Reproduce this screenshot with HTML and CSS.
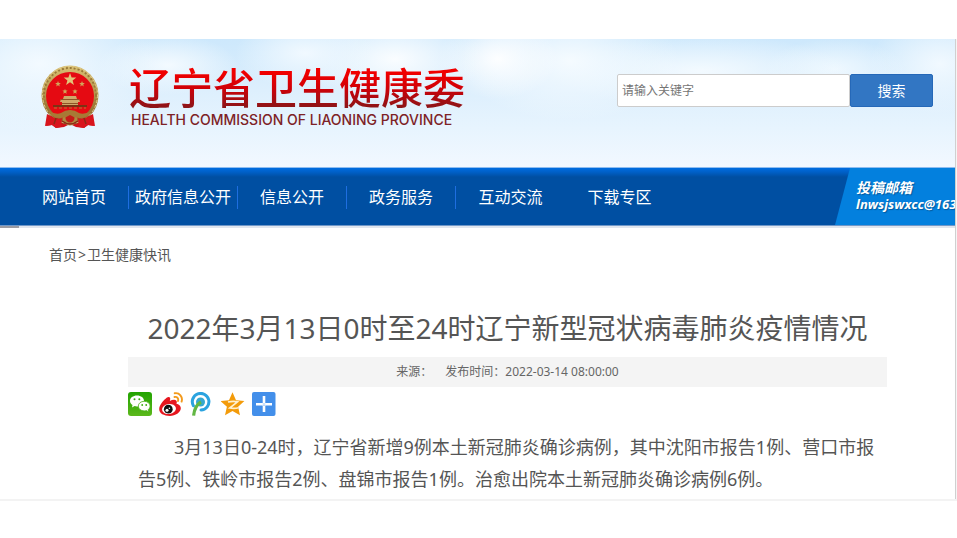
FILE: index.html
```html
<!DOCTYPE html>
<html lang="zh-CN">
  <head>
    <title>辽宁省卫生健康委</title>
    <meta charset="utf-8" />
    <meta name="viewport" content="width=device-width, initial-scale=1" />
    <link rel="stylesheet" href="styles.css">
  </head>
  <body>
    <div class="page">
      <div class="site">
        <header class="header">
          <a href="#" class="logo">
            <svg class="emblem" viewBox="0 0 58 64" aria-hidden="true">
              <defs>
                <linearGradient id="gold" x1="0" y1="0" x2="0" y2="1">
                  <stop offset="0" stop-color="#d9c074" />
                  <stop offset="0.5" stop-color="#b3924a" />
                  <stop offset="1" stop-color="#7d5520" />
                </linearGradient>
              </defs>
              <path d="M9 50L5 61l6-1 4 3 8-1 6-3 6 3 8 1 4-3 6 1-4-11z" fill="#d3101a" />
              <ellipse cx="29" cy="30" rx="28.500" ry="29.500" fill="url(#gold)" />
              <ellipse cx="29" cy="30" rx="26" ry="27" fill="none" stroke="#9a7a38" stroke-width="2" stroke-dasharray="2 2" />
              <ellipse cx="29" cy="30" rx="27.500" ry="28.500" fill="none" stroke="#e2cf90" stroke-width="1" stroke-dasharray="3 2" />
              <circle cx="29" cy="31" r="24" fill="#e50a12" />
              <path d="M29 8l1.600 4.400 4.700.1-3.700 2.900 1.300 4.500L29 17.300l-3.900 2.600 1.300-4.500-3.700-2.900 4.700-.1z" fill="#e2c479" />
              <path d="M17 16l.8 2 2 .1-1.600 1.300.6 2.100-1.800-1.200-1.800 1.200.6-2.100-1.600-1.300 2-.1zM41 16l.8 2 2 .1-1.600 1.300.6 2.100-1.800-1.200-1.800 1.200.6-2.100-1.600-1.300 2-.1zM24 24l.8 1.500 1.800.1-1.400 1.200.5 1.900-1.700-1-1.700 1 .5-1.900-1.400-1.200 1.800-.1zM34 24l.8 1.500 1.800.1-1.400 1.200.5 1.900-1.700-1-1.700 1 .5-1.900-1.400-1.200 1.800-.1z" fill="#d2a55a" />
              <path d="M23 31h12l1 3H22zM20 34h18l1 3H19zM21 37h16v4H21z" fill="#cfa96a" />
              <path d="M20 34.500h18M21 38.500h16" stroke="#8d5628" />
              <path d="M12 40h34v2H12z" fill="#7c3114" />
              <path d="M13 43h32" stroke="#b77a35" stroke-dasharray="3 2" />
              <circle cx="29" cy="53" r="6" fill="#c51b18" stroke="#af8941" stroke-width="3" />
              <path d="M8 46q7 4 12 2 4-3 9-3t9 3q5 2 12-2-3 8-12 7-5 0-9-3-4 3-9 3-9 1-12-7z" fill="#a87935" />
              <path d="M6 49l8 4 7 1-1 8-5 1-4-3-7 1zM52 49l-8 4-7 1 1 8 5 1 4-3 7 1z" fill="#d8141c" />
              <path d="M21 56q8 6 16 0M15 53l-2 6M43 53l2 6" fill="none" stroke="#8d2a16" stroke-width="1.500" />
            </svg>
            <span class="logo-text">
              <span class="logo-name">辽宁省卫生健康委</span>
              <span class="logo-sub">HEALTH COMMISSION OF LIAONING PROVINCE</span>
            </span>
          </a>
          <form class="search">
            <input type="text" class="search-input" placeholder="请输入关键字" aria-label="请输入关键字" />
            <button type="button" class="search-btn">搜索</button>
          </form>
        </header>

        <nav class="nav">
          <div class="menu">
            <a href="#">网站首页</a>
            <a href="#">政府信息公开</a>
            <a href="#">信息公开</a>
            <a href="#">政务服务</a>
            <a href="#">互动交流</a>
            <a href="#">下载专区</a>
          </div>
          <a href="#" class="mailbox">
            <span>投稿邮箱</span>
            <span class="mail">lnwsjswxcc@163</span>
          </a>
        </nav>
        <div class="nav-line"></div>

        <div class="crumbs"><a href="#">首页</a><span>&gt;</span><a href="#">卫生健康快讯</a></div>

        <main class="article">
          <h1>2022年3月13日0时至24时辽宁新型冠状病毒肺炎疫情情况</h1>
          <div class="meta">
            <span>来源：</span>
            <span>发布时间：2022-03-14 08:00:00</span>
          </div>
          <div class="share">
            <a href="#" aria-label="微信">
              <svg viewBox="0 0 24 24">
                <defs>
                  <linearGradient id="green" x1="0" y1="0" x2="0" y2="1">
                    <stop offset="0" stop-color="#21a300" />
                    <stop offset="1" stop-color="#5cb81c" />
                  </linearGradient>
                </defs>
                <rect width="24" height="24" rx="3" fill="url(#green)" />
                <path d="M9 3.500c-4 0-7 2.300-7 5.400 0 1.700 1 3.200 2.500 4.100L4 15.500l2.600-1.400q1.200.3 2.400.3c4 0 7-2.400 7-5.500S13 3.500 9 3.500z" fill="#fff" />
                <path d="M16.200 9.300c-3.300 0-5.900 2-5.900 4.800s2.600 4.800 5.900 4.800q1.200 0 2.200-.3l2.400 1.300-.5-2.300c1.100-.9 1.800-2.100 1.800-3.500 0-2.800-2.600-4.800-5.900-4.800z" fill="#fff" stroke="#4bb016" stroke-width=".8" />
                <circle cx="6.500" cy="7.300" r="1" fill="#39aa0d" />
                <circle cx="11.300" cy="7.300" r="1" fill="#39aa0d" />
                <circle cx="14.200" cy="13" r=".9" fill="#39aa0d" />
                <circle cx="18.200" cy="13" r=".9" fill="#39aa0d" />
              </svg>
            </a>
            <a href="#" aria-label="新浪微博">
              <svg viewBox="0 0 24 24">
                <path d="M10.500 5.200c1.300 1 .6 2.700.3 3.700 2.300-1 5.400-1.700 6.600-.2.700 1 .4 2.100 0 3.100 2.200.6 4.600 2 4.400 4.700-.3 4-5.200 7.400-11 7.400C5 23.900.2 21.500.2 17.300c0-3.600 3-7.300 5.400-9.700 1.600-1.600 3.500-3.300 4.900-2.400z" fill="#e6161e" />
                <ellipse cx="10" cy="17" rx="7" ry="5" transform="rotate(-8 10 17)" fill="#fff" />
                <circle cx="9.300" cy="17.200" r="4.400" fill="#111" />
                <circle cx="8" cy="18.300" r="1.500" fill="#fff" />
                <circle cx="10.400" cy="16.300" r=".8" fill="#fff" />
                <path d="M15.700 1.300c4.600-.9 8.400 3.500 6.900 8.300M15.500 5c2.700-.5 4.300 1.500 3.500 4" fill="none" stroke="#f39a1c" stroke-width="1.900" stroke-linecap="round" />
              </svg>
            </a>
            <a href="#" aria-label="腾讯微博">
              <svg viewBox="0 0 24 24">
                <path d="M3.400 13.800A8.300 8.300 0 1 1 11 18" fill="none" stroke="#2ba3df" stroke-width="3" stroke-linecap="round" />
                <circle cx="10.500" cy="10" r="4.500" fill="#35a8cf" />
                <path d="M11 10C6.700 12.500 4.200 17 3.600 23.700" fill="none" stroke="#62b744" stroke-width="3.200" />
              </svg>
            </a>
            <a href="#" aria-label="QQ空间">
              <svg viewBox="0 0 24 24">
                <path d="M11.500.3l3.500 7.900 8.400.9-6.300 5.700 1.900 8.500-7.500-4.400L4 23.300l1.900-8.500L-.4 9.100l8.400-.9z" fill="#f39b0a" />
                <path d="M7 10q5-1 9.500-.2L8.700 16q5 .8 8.700-.3" fill="none" stroke="#fff1cf" stroke-width="1.700" />
              </svg>
            </a>
            <a href="#" aria-label="更多">
              <svg viewBox="0 0 24 24">
                <rect width="23.500" height="24" rx="2" fill="#438fea" />
                <path d="M12 4v7M12 13.500V20M4 12.300h7M13 12.300h7" stroke="#fff" stroke-width="2.600" />
                <path d="M10.700 12.300h2.600" stroke="#cfe2fb" stroke-width="2.600" />
              </svg>
            </a>
          </div>
          <p>3月13日0-24时，辽宁省新增9例本土新冠肺炎确诊病例，其中沈阳市报告1例、营口市报告5例、铁岭市报告2例、盘锦市报告1例。治愈出院本土新冠肺炎确诊病例6例。</p>
        </main>
      </div>
      <div class="edge"></div>
    </div>
  </body>
</html>
```

FILE: styles.css
```css
* {
  box-sizing: border-box;
}
body {
  margin: 0;
  padding-top: 39px;
  background: #fff;
  color: #555;
  font-family: "Noto Sans", "Noto Sans CJK SC", sans-serif;
}
a {
  color: inherit;
  text-decoration: none;
}
.page {
  display: flex;
  border-bottom: 2px solid #f3f3f3;
}
.site {
  flex: 1;
  min-width: 0;
}
/* scrollbar track on the right */
.edge {
  width: 2px;
  background: #f5f5f5;
  border-left: 1px solid #d0d0d0;
}
.header {
  display: flex;
  justify-content: space-between;
  align-items: flex-start;
  height: 128px;
  padding: 24px 22px 0 41px;
  background:
    radial-gradient(ellipse 120px 70px at 40px 25px, #f3faff, rgba(243, 250, 255, 0)),
    radial-gradient(ellipse 70px 30px at 168px 26px, #f3faff, rgba(243, 250, 255, 0)),
    radial-gradient(ellipse 70px 36px at 305px 14px, #f1f9ff, rgba(241, 249, 255, 0)),
    radial-gradient(ellipse 90px 44px at 395px 20px, #fafdff, rgba(250, 253, 255, 0)),
    radial-gradient(ellipse 60px 40px at 498px 20px, #fdfeff, rgba(253, 254, 255, 0)),
    radial-gradient(ellipse 110px 60px at 570px 22px, #f5fbff, rgba(245, 251, 255, 0)),
    radial-gradient(ellipse 150px 36px at 700px 32px, #f3faff, rgba(243, 250, 255, 0)),
    radial-gradient(ellipse 70px 30px at 835px 30px, #eef8ff, rgba(238, 248, 255, 0)),
    radial-gradient(ellipse 70px 50px at 940px 25px, #f1f9ff, rgba(241, 249, 255, 0)),
    linear-gradient(#cde8fc, #ddeffd 40%, #e7f4fe 70%, #f2f8ff);
}
.logo {
  display: flex;
  gap: 30px;
}
.emblem {
  width: 58px;
  height: 64px;
  margin-top: 2px;
}
.logo-text {
  display: flex;
  flex-direction: column;
}
.logo-name {
  font-size: 42px;
  font-weight: 500;
  line-height: 50px;
  background: linear-gradient(#f00000 20%, #d00008 50%, #8a1518 90%);
  -webkit-background-clip: text;
  background-clip: text;
  color: transparent;
}
.logo-sub {
  padding-left: 2px;
  font-family: Inter, "Liberation Sans", sans-serif;
  font-size: 14px;
  font-weight: 500;
  line-height: 14px;
  color: #7d2226;
  white-space: nowrap;
}
.search {
  display: flex;
  margin-top: 11px;
}
.search-input {
  width: 233px;
  height: 33px;
  padding: 0 4px;
  border: 1px solid #ccc;
  border-radius: 2px;
  font: inherit;
  font-size: 12px;
}
.search-input::placeholder {
  color: #757575;
}
.search-btn {
  width: 83px;
  height: 33px;
  padding: 0 0 2px;
  border: 1px solid #2568b8;
  border-radius: 2px;
  background: #3276c3;
  color: #fff;
  font: inherit;
  font-size: 14px;
}
.nav {
  display: flex;
  justify-content: space-between;
  height: 58px;
  padding-left: 20px;
  border-top: 1px solid #8fbdf0;
  background: linear-gradient(#006ce0, #0060c8 4px, #004fa2 9px, #004fa2);
}
.menu {
  display: flex;
  align-items: center;
  padding-top: 2px;
}
.menu a {
  width: 109px;
  height: 23px;
  line-height: 23px;
  font-size: 16px;
  color: #fff;
  text-align: center;
  white-space: nowrap;
}
.menu a:nth-child(-n + 4) {
  border-right: 1px solid #1e6ee0;
}
.mailbox {
  display: flex;
  flex-direction: column;
  width: 120px;
  padding: 11px 0 0 21px;
  background: #0380de;
  clip-path: polygon(15px 0, 100% 0, 100% 100%, 0 100%);
  color: #fff;
  font-size: 14px;
  font-weight: bold;
  font-style: italic;
  line-height: 17px;
  text-shadow: 1px 1px 1px #045a9e;
  white-space: nowrap;
}
.mail {
  font-size: 13px;
}
.nav-line {
  height: 3px;
  border-top: 1px solid #6f97c8;
  background: linear-gradient(90deg, #9a9ba3 19px, #dfe5ee 19px);
}
.crumbs {
  display: flex;
  gap: 1px;
  padding: 16px 49px 0;
  font-size: 14px;
  line-height: 22px;
}
.article {
  padding: 0 68px 4px 128px;
}
h1 {
  margin: 41px 0 8px;
  font-size: 28px;
  font-weight: normal;
  line-height: 42px;
  text-align: center;
  white-space: nowrap;
}
.meta {
  display: flex;
  justify-content: center;
  gap: 13px;
  background: #f4f4f4;
  color: #666;
  font-size: 12px;
  line-height: 30px;
}
.share {
  display: flex;
  gap: 7px;
  margin-top: 5px;
}
.share a,
.share svg {
  display: block;
  width: 24px;
  height: 24px;
}
.article p {
  margin: 15px 0 0;
  padding: 0 10px;
  font-size: 18px;
  line-height: 32px;
  text-indent: 2em;
}
```
